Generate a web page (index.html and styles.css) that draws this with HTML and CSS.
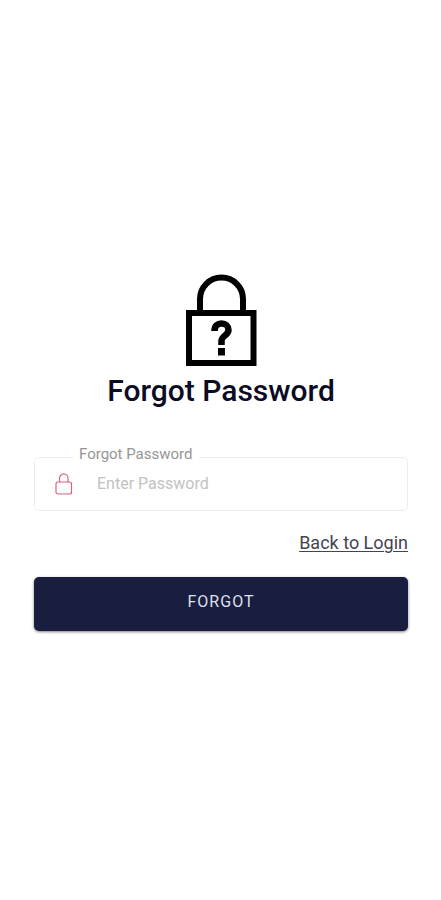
FILE: index.html
```html
<!DOCTYPE html>
<html lang="en">
<head>
<meta charset="utf-8">
<meta name="viewport" content="width=device-width, initial-scale=1">
<title>Forgot Password</title>
<link rel="stylesheet" href="styles.css">
</head>
<body>
<main class="page">
  <svg class="hero" viewBox="0 0 72 92" aria-hidden="true">
    <path d="M15 37V25a21.500 21.500 0 0 1 43 0v12" fill="none" stroke="#000" stroke-width="6"/>
    <rect x="4" y="39" width="64.500" height="50" fill="none" stroke="#000" stroke-width="6"/>
    <path d="M29.500 57c0-5 3-7.500 7-7.500s7 3 7 6.500c0 5.500-7 5.500-7 11v4" fill="none" stroke="#000" stroke-width="6.500"/>
    <rect x="33" y="74" width="7" height="7.500"/>
  </svg>
  <h1 class="title">Forgot Password</h1>
  <form class="form">
    <div class="field">
      <label class="field-label" for="password">Forgot Password</label>
      <svg class="field-icon" viewBox="0 0 18 22" fill="none" stroke="#d9637a" stroke-width="1.200" aria-hidden="true">
        <rect x="1" y="9" width="15.500" height="12" rx="2"/>
        <path d="M4.500 9V5.500a4.200 4.500 0 0 1 8.500 0V9"/>
      </svg>
      <input class="field-input" id="password" type="password" placeholder="Enter Password">
    </div>
    <a class="back" href="#login">Back to Login</a>
    <button class="submit" type="submit">FORGOT</button>
  </form>
</main>
</body>
</html>
```
FILE: styles.css
```css
* {
  box-sizing: border-box;
}

body {
  margin: 0;
  background: #fff;
  font-family: Roboto, "Liberation Sans", sans-serif;
}

.page {
  display: flex;
  flex-direction: column;
  align-items: center;
  justify-content: center;
  min-height: 100vh;
  padding: 4px 33px 0 34px;
}

.hero {
  width: 72px;
  height: 92px;
}

.title {
  margin: 7px 0 48px;
  color: #0b0b24;
  font-size: 30px;
  font-weight: 500;
  line-height: 36px;
}

.form {
  display: flex;
  flex-direction: column;
  width: 100%;
}

.field {
  position: relative;
  display: flex;
  align-items: center;
  gap: 24px;
  height: 54px;
  padding: 0 20px;
  border: 1px solid #ededed;
  border-radius: 5px;
}

.field-label {
  position: absolute;
  top: -13px;
  left: 38px;
  padding: 0 6px;
  background: #fff;
  color: #959595;
  font-size: 15px;
  line-height: 18px;
}

.field-icon {
  flex: none;
  width: 18px;
  height: 22px;
}

.field-input {
  flex: 1;
  min-width: 0;
  padding: 0;
  border: 0;
  outline: 0;
  background: transparent;
  color: #333;
  font: inherit;
  font-size: 16px;
  line-height: 20px;
}

.field-input::placeholder {
  color: #c2c2c2;
}

.back {
  align-self: flex-end;
  margin: 20px 0 22px;
  color: #44444f;
  font-size: 18px;
  line-height: 24px;
  text-decoration-thickness: 1px;
  text-underline-offset: 2px;
}

.submit {
  height: 54px;
  padding: 0 0 4px;
  border: 0;
  border-radius: 5px;
  background: #191d3f;
  box-shadow: 0 1px 3px rgba(0, 0, 0, 0.5);
  color: #dfe0ea;
  font: inherit;
  font-size: 16px;
  letter-spacing: 1px;
}
```
